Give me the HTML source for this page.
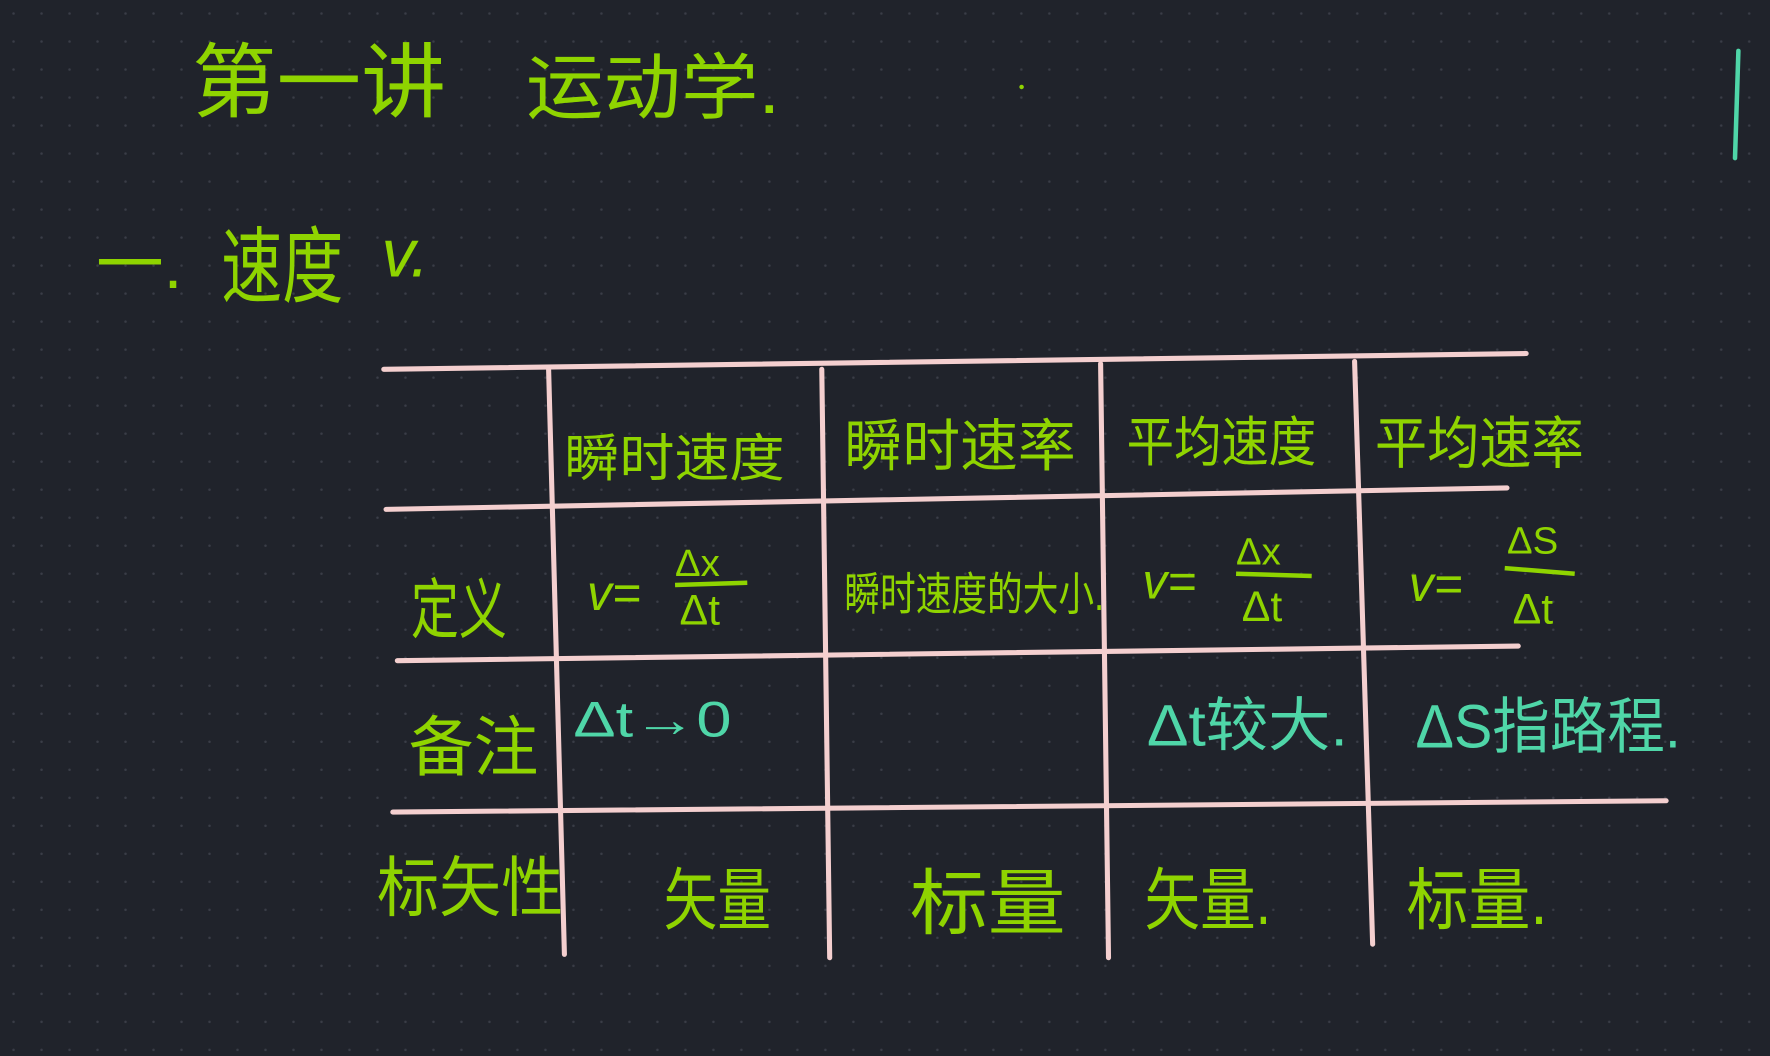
<!DOCTYPE html>
<html><head><meta charset="utf-8"><style>
html,body{margin:0;padding:0;background:#20232b;}
svg{display:block}
text{font-family:"Liberation Sans","Noto Sans CJK SC",sans-serif;}
</style></head><body>
<svg width="1770" height="1056" viewBox="0 0 1568 935" preserveAspectRatio="none" xmlns="http://www.w3.org/2000/svg">
<defs><pattern id="d" width="24.8" height="24.8" patternUnits="userSpaceOnUse"><circle cx="12" cy="12" r="1.1" fill="#3a3d47"/></pattern></defs>
<rect width="1568" height="935" fill="#20232b"/>
<rect width="1568" height="935" fill="url(#d)"/>
<g fill="#8fd400">
<text x="170" y="98" font-size="72" textLength="225" lengthAdjust="spacingAndGlyphs">第一讲</text>
<text x="466" y="100" font-size="64" textLength="225" lengthAdjust="spacingAndGlyphs">运动学.</text>
<circle cx="905" cy="77" r="2"/>
<text x="85" y="255" font-size="60">一.</text>
<text x="196" y="262" font-size="74" textLength="108" lengthAdjust="spacingAndGlyphs">速度</text>
<text x="338" y="245" font-size="60" font-style="italic">v.</text>
<text x="500" y="422" font-size="46" textLength="195" lengthAdjust="spacingAndGlyphs">瞬时速度</text>
<text x="748" y="412" font-size="50" textLength="205" lengthAdjust="spacingAndGlyphs">瞬时速率</text>
<text x="998" y="408" font-size="48" textLength="168" lengthAdjust="spacingAndGlyphs">平均速度</text>
<text x="1218" y="410" font-size="50" textLength="185" lengthAdjust="spacingAndGlyphs">平均速率</text>
<text x="364" y="560" font-size="58" textLength="85" lengthAdjust="spacingAndGlyphs">定义</text>
<text x="520" y="540" font-size="44" font-style="italic">v=</text>
<text x="598" y="510" font-size="34">Δx</text>
<line x1="598" y1="518" x2="662" y2="516" stroke="#8fd400" stroke-width="4"/>
<text x="602" y="553" font-size="38">Δt</text>
<text x="748" y="540" font-size="40" textLength="230" lengthAdjust="spacingAndGlyphs">瞬时速度的大小.</text>
<text x="1012" y="530" font-size="44" font-style="italic">v=</text>
<text x="1095" y="500" font-size="34">Δx</text>
<line x1="1095" y1="508" x2="1162" y2="510" stroke="#8fd400" stroke-width="4"/>
<text x="1100" y="550" font-size="38">Δt</text>
<text x="1248" y="532" font-size="44" font-style="italic">v=</text>
<text x="1335" y="490" font-size="34">ΔS</text>
<line x1="1333" y1="503" x2="1395" y2="508" stroke="#8fd400" stroke-width="4"/>
<text x="1340" y="552" font-size="38">Δt</text>
<text x="362" y="682" font-size="58" textLength="115" lengthAdjust="spacingAndGlyphs">备注</text>
<text x="334" y="806" font-size="58" textLength="165" lengthAdjust="spacingAndGlyphs">标矢性</text>
<text x="588" y="818" font-size="60" textLength="95" lengthAdjust="spacingAndGlyphs">矢量</text>
<text x="806" y="822" font-size="64" textLength="138" lengthAdjust="spacingAndGlyphs">标量</text>
<text x="1014" y="818" font-size="60" textLength="112" lengthAdjust="spacingAndGlyphs">矢量.</text>
<text x="1246" y="818" font-size="60" textLength="125" lengthAdjust="spacingAndGlyphs">标量.</text>
</g>
<g fill="#4fd6a8">
<text x="508" y="652" font-size="44" textLength="140" lengthAdjust="spacingAndGlyphs">Δt→0</text>
<text x="1016" y="660" font-size="52" textLength="178" lengthAdjust="spacingAndGlyphs">Δt较大.</text>
<text x="1254" y="662" font-size="54" textLength="235" lengthAdjust="spacingAndGlyphs">ΔS指路程.</text>
</g>
<line x1="1540" y1="45" x2="1537" y2="140" stroke="#4fd6a8" stroke-width="4" stroke-linecap="round"/>
<g stroke="#f4cfcf" stroke-width="4.5" stroke-linecap="round">
<line x1="340" y1="327" x2="1352" y2="313"/>
<line x1="342" y1="451" x2="1335" y2="432"/>
<line x1="352" y1="585" x2="1345" y2="572"/>
<line x1="348" y1="719" x2="1476" y2="709"/>
<line x1="486" y1="327" x2="500" y2="845"/>
<line x1="728" y1="327" x2="735" y2="848"/>
<line x1="975" y1="322" x2="982" y2="848"/>
<line x1="1200" y1="320" x2="1216" y2="836"/>
</g>
</svg>
</body></html>
